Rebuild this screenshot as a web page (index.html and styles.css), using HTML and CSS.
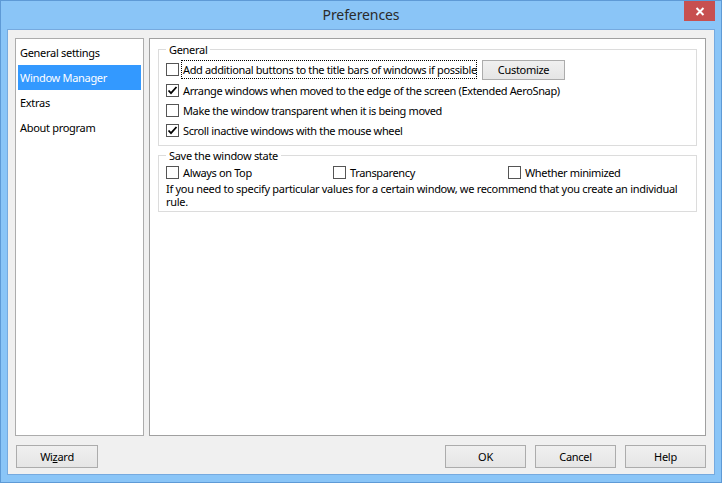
FILE: index.html
```html
<!DOCTYPE html>
<html>
<head>
<meta charset="utf-8">
<title>Preferences</title>
<link rel="stylesheet" href="styles.css">
</head>
<body>
<div class="window">
  <div class="titlebar">
    <div></div>
    <div class="title">Preferences</div>
    <div class="close"><svg width="10" height="9" viewBox="0 0 10 9"><path d="M1.5 1 L8.5 8 M8.5 1 L1.5 8" stroke="#fff" stroke-width="2" fill="none"/></svg></div>
  </div>
  <div class="client">
    <div class="main">
      <ul class="nav">
        <li>General settings</li>
        <li class="selected">Window Manager</li>
        <li>Extras</li>
        <li>About program</li>
      </ul>
      <div class="panel">
        <fieldset class="group general">
          <legend>General</legend>
          <div class="row first">
            <span class="cb"></span><span class="label focus">Add additional buttons to the title bars of windows if possible</span>
            <button class="btn small">Customize</button>
          </div>
          <div class="row">
            <span class="cb checked"><svg width="11" height="11" viewBox="0 0 11 11"><path d="M1.5 5.5 L4 8.2 L9.5 2" stroke="#000" stroke-width="1.8" fill="none"/></svg></span><span class="label">Arrange windows when moved to the edge of the screen (Extended AeroSnap)</span>
          </div>
          <div class="row">
            <span class="cb"></span><span class="label">Make the window transparent when it is being moved</span>
          </div>
          <div class="row">
            <span class="cb checked"><svg width="11" height="11" viewBox="0 0 11 11"><path d="M1.5 5.5 L4 8.2 L9.5 2" stroke="#000" stroke-width="1.8" fill="none"/></svg></span><span class="label">Scroll inactive windows with the mouse wheel</span>
          </div>
        </fieldset>
        <fieldset class="group state">
          <legend>Save the window state</legend>
          <div class="state-row">
            <div class="opt"><span class="cb"></span><span class="label">Always on Top</span></div>
            <div class="opt"><span class="cb"></span><span class="label">Transparency</span></div>
            <div class="opt"><span class="cb"></span><span class="label">Whether minimized</span></div>
          </div>
          <p class="note">If you need to specify particular values for a certain window, we recommend that you create an individual<br>rule.</p>
        </fieldset>
      </div>
    </div>
    <div class="footer">
      <button class="btn wizard">Wi<u>z</u>ard</button>
      <div class="spacer"></div>
      <button class="btn">OK</button>
      <button class="btn">Cancel</button>
      <button class="btn">Help</button>
    </div>
  </div>
</div>
</body>
</html>
```

FILE: styles.css
```css
html, body {
  margin: 0;
  padding: 0;
}
body {
  font-family: "Noto Sans", "Open Sans", sans-serif;
  font-size: 11px;
  color: #000;
}
.window {
  width: 722px;
  height: 483px;
  box-sizing: border-box;
  border: 1px solid #5e9ad6;
  background: #8ac5f7;
  display: flex;
  flex-direction: column;
  padding: 0 6px 7px 6px;
}
.titlebar {
  height: 28px;
  display: grid;
  grid-template-columns: 1fr auto 1fr;
  align-items: start;
}
.title {
  font-size: 14px;
  line-height: 28px;
  color: #2b2b2b;
  letter-spacing: -0.1px;
}
.close {
  justify-self: end;
  width: 31px;
  height: 20px;
  background: #c75050;
  display: flex;
  align-items: center;
  justify-content: center;
}
.client {
  flex: 1;
  border: 1px solid #76aadf;
  background: #f0f0f0;
  padding: 8px 8px 6px 7px;
  display: flex;
  flex-direction: column;
}
.main {
  height: 398px;
  display: flex;
  gap: 5px;
}
.nav {
  list-style: none;
  margin: 0;
  padding: 1px;
  width: 129px;
  box-sizing: border-box;
  background: #fff;
  border: 1px solid #acacac;
}
.nav li {
  height: 25px;
  line-height: 25px;
  padding-left: 2px;
  margin: 0 1px;
  letter-spacing: -0.3px;
}
.nav li.selected {
  background: #3399ff;
  color: #fff;
}
.panel {
  flex: 1;
  background: #fff;
  border: 1px solid #a0a0a0;
  padding: 0 8px;
}
.group {
  border: 1px solid #dcdcdc;
  margin: 3px 0 0 0;
  padding: 0 7px;
  min-width: 0;
}
.group legend {
  padding: 0 3px;
  line-height: 15px;
  letter-spacing: -0.3px;
}
.general {
  padding-top: 2px;
  padding-bottom: 5px;
}
.row {
  height: 20px;
  display: flex;
  align-items: center;
}
.row.first {
  height: 21px;
}
.cb {
  width: 13px;
  height: 13px;
  box-sizing: border-box;
  border: 1px solid #555;
  background: #fff;
  flex: none;
  display: flex;
  align-items: center;
  justify-content: center;
}
.label {
  margin-left: 3px;
  white-space: nowrap;
  letter-spacing: -0.36px;
  line-height: 15px;
  padding: 1px 1px;
}
.focus {
  outline: 1px dotted #000;
  outline-offset: 0;
  width: 294px;
  box-sizing: border-box;
}
.btn {
  font-family: inherit;
  font-size: 11px;
  letter-spacing: -0.3px;
  color: #000;
  border: 1px solid #acacac;
  background: linear-gradient(#f0f0f0, #e5e5e5);
  padding: 0;
  width: 81px;
  height: 23px;
}
.btn.small {
  width: 83px;
  height: 20px;
  margin-left: 6px;
}
.state {
  margin-top: 2px;
  padding-bottom: 3px;
}
.state-row {
  height: 19px;
  display: grid;
  grid-template-columns: 167px 175px auto;
  align-items: center;
}
.opt {
  display: flex;
  align-items: center;
}
.note {
  margin: 0;
  line-height: 13px;
  letter-spacing: -0.3px;
}
.footer {
  margin-top: 9px;
  display: flex;
  gap: 9px;
}
.spacer {
  flex: 1;
}
.btn.wizard {
  margin-left: 1px;
  width: 82px;
}
```
